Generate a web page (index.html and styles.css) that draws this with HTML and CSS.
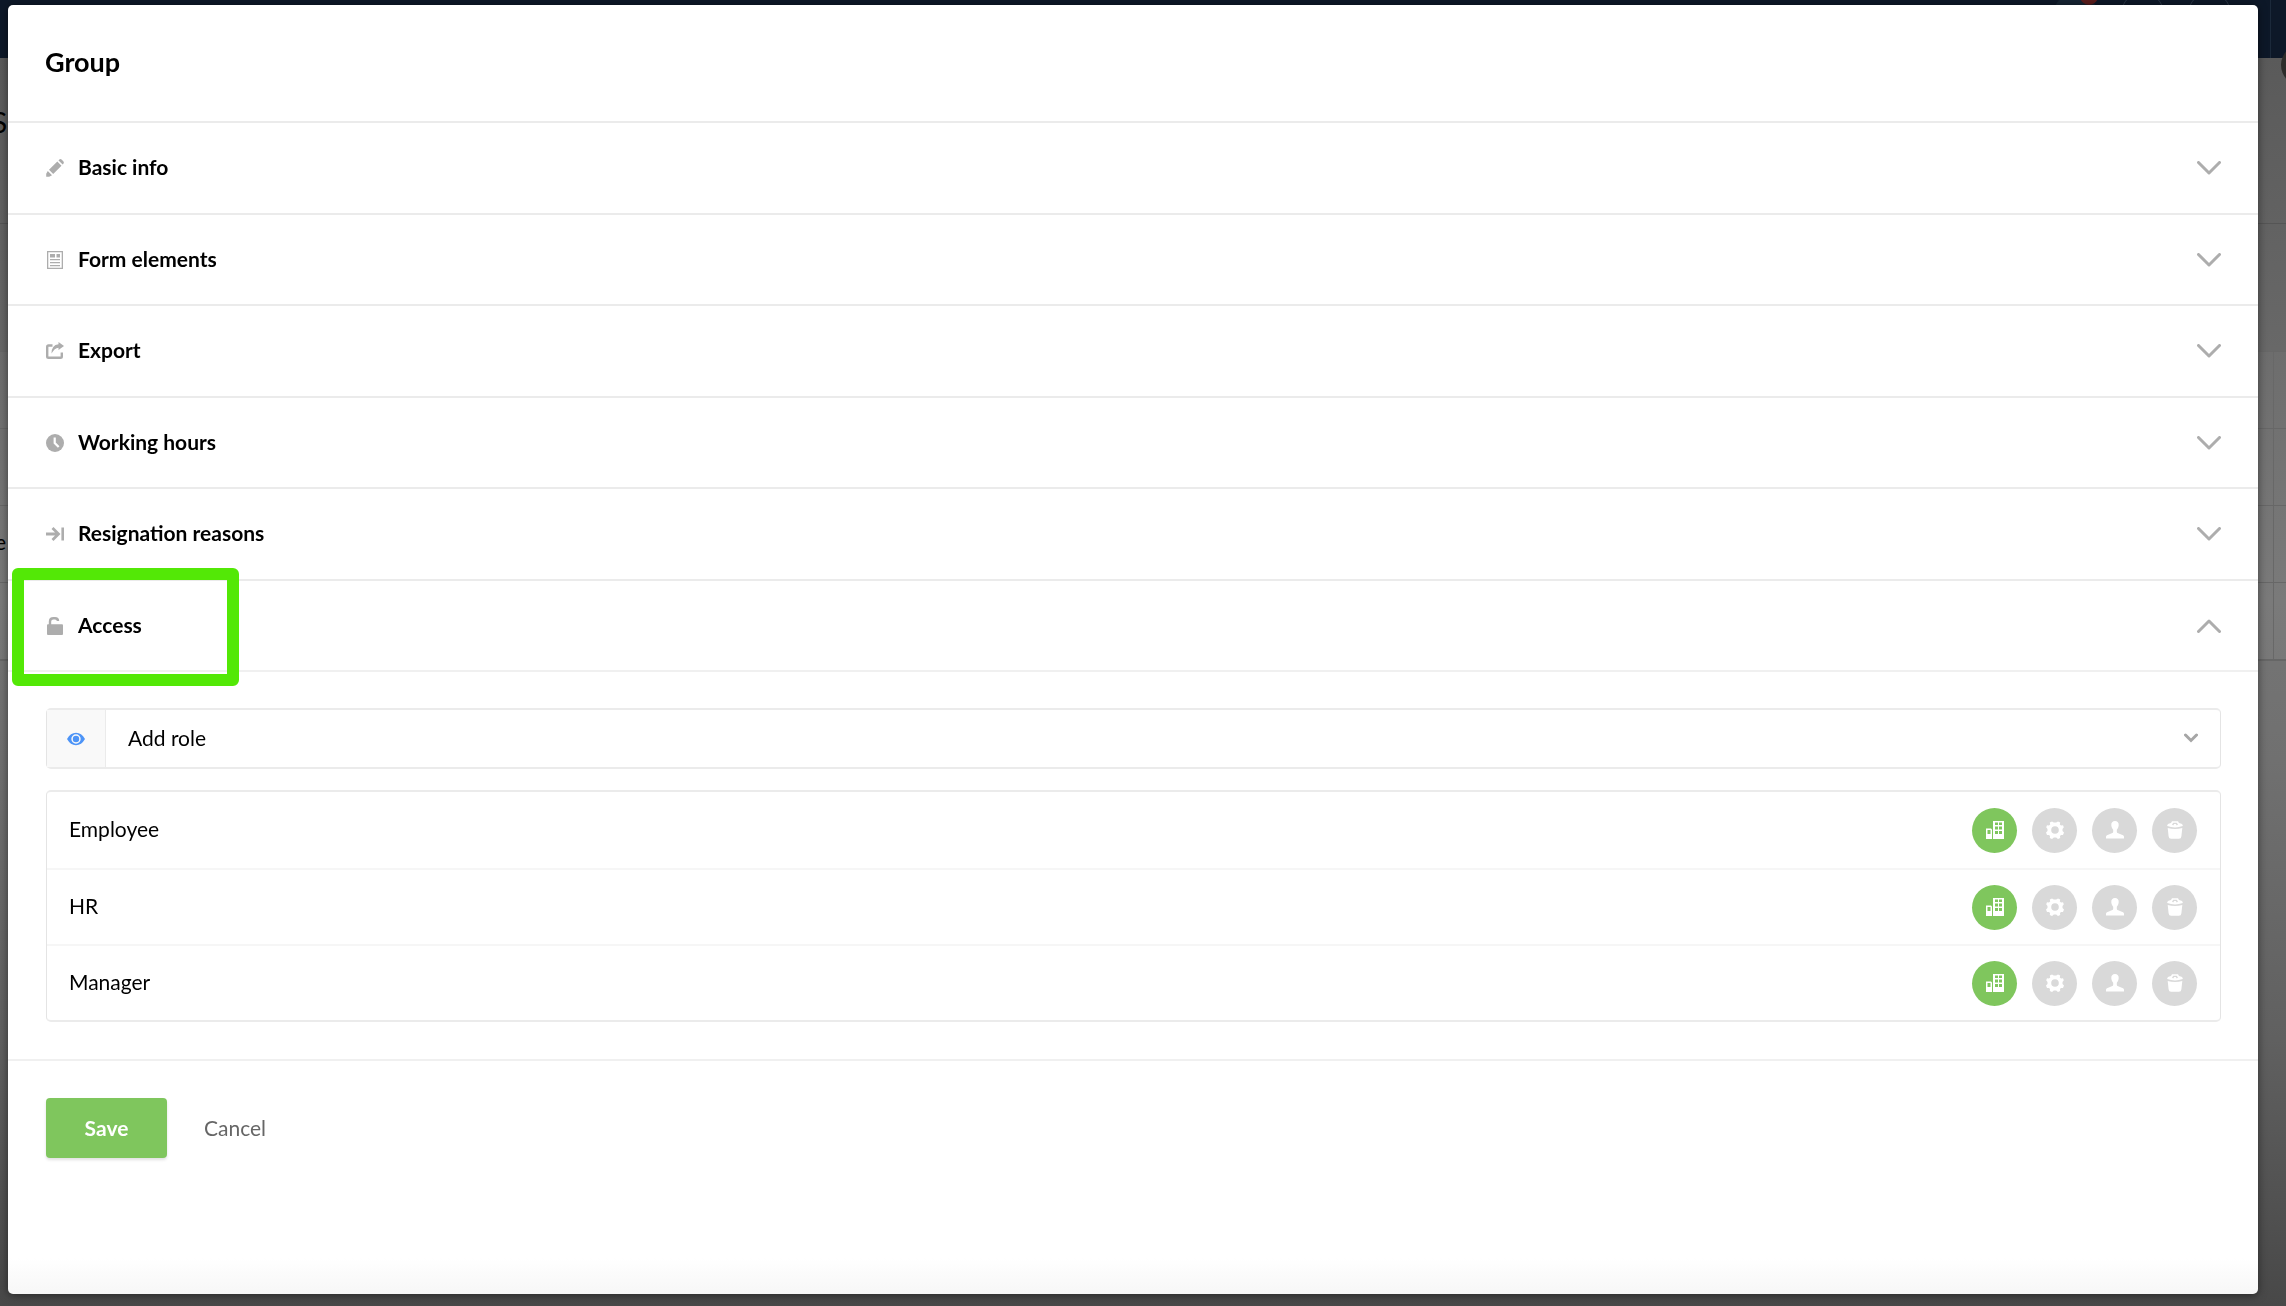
FILE: index.html
```html
<!DOCTYPE html>
<html lang="en">
<head>
    <meta charset="utf-8">
    <title>Group</title>
    <link rel="stylesheet" href="styles.css">
</head>
<body>
    <!-- shared icons -->
    <svg class="sprite" aria-hidden="true">
        <symbol id="chevron" viewBox="0 0 24 14"><path d="M1.5 1.5 12 12 22.5 1.5" fill="none" stroke="currentColor" stroke-width="3" stroke-linecap="round" stroke-linejoin="round"/></symbol>
        <symbol id="building" viewBox="0 0 18 18"><path fill-rule="evenodd" d="M7 0h11v18H7zM9 1.500v2.500h3v-2.500zM13 1.500v2.500h3v-2.500zM9 5.500v3h3v-3zM13 5.500v3h3v-3zM9 10v3h3v-3zM13 10v3h3v-3zM0 7.500h5l1 1V18H0zM1.500 9v4h3V9z"/></symbol>
        <symbol id="gear" viewBox="0 0 18 18"><path fill-rule="evenodd" d="M6 .5 7.800 1.500h2.400L12 .5l2.200 1L13.800 3.500 15 4.500l2-.2L17.800 6.200 16.500 8v2l1.500 1.600-1 2.400-2-.1-1 1 .2 2-2.200 1L10.200 16.500H7.800L6 18l-2.200-1 .2-2-1-1-2 .1L0 11.600 1.500 10V8L.2 6.200 1 4.300l2 .2 1.200-1L3.800 1.500zM9 5.200a3.800 3.800 0 1 0 0 7.600 3.800 3.800 0 0 0 0-7.600z"/></symbol>
        <symbol id="person" viewBox="0 0 18 18"><path d="M9 0c2.400 0 4 1.700 3.700 4.300-.2 1.800-.8 3.300-1.900 4.400v2.100c0 .8.500 1.200 1.400 1.500l4.200 1.700c1 .4 1.600 1 1.600 2V17.500H0V16c0-1 .6-1.600 1.600-2l4.200-1.700c.9-.3 1.400-.7 1.400-1.500V8.700C6.100 7.600 5.500 6.100 5.300 4.300 5 1.700 6.600 0 9 0z"/></symbol>
        <symbol id="bin" viewBox="0 0 18 18"><path fill-rule="evenodd" d="M6 .3h6l1 1.700 2.500.8q1.500 1 1.300 2.300Q9 8 1.200 5.100 1 3.800 2.500 2.800L5 2zM7.300 1.800 6 3.600l1.200.8.900-1.300h1.800l.9 1.300 1.200-.8-1.300-1.800z"/><path d="M1.700 7.100q7.300 1.900 14.600 0l-.9 8.200q-.2 2.500-2.500 2.500H5.100q-2.300 0-2.500-2.500z"/></symbol>
    </svg>

    <!-- page behind the dialog -->
    <div class="page" aria-hidden="true">
        <div class="topbar">
            <span class="bubble filled"><i class="badge"></i></span>
            <span class="bubble"></span>
            <span class="bubble"></span>
            <span class="profile"></span>
        </div>
        <div class="page-head"><span>S</span><i class="avatar"></i></div>
        <div class="page-filter"></div>
        <div class="page-table">
            <div></div>
            <div></div>
            <div>e</div>
            <div></div>
        </div>
    </div>

    <main class="modal" role="dialog" aria-labelledby="title">
        <h1 class="modal-title" id="title">Group</h1>

        <div class="accordion">
            <button class="section" type="button" aria-expanded="false">
                <svg class="icon" viewBox="0 0 18 18"><path d="m11.300 2.500 4.200 4.200-8.300 8.300L3 10.800zM12.500 1.400 13.300.6q1.300-1 2.500.1l1.500 1.500q1.100 1.200.1 2.500l-.7.800zM1.800 12 6 16.200 3.200 17.800H.2V14.800z"/></svg>
                <span>Basic info</span>
                <svg class="chevron"><use href="#chevron"/></svg>
            </button>
            <button class="section" type="button" aria-expanded="false">
                <svg class="icon" viewBox="0 0 18 18"><path fill-rule="evenodd" d="M1 0h16v18H1zM2.300 1.300v15.400h13.400V1.300z"/><path d="M4 3h5v3.500H4zM10.500 3H14v3.500h-3.500zM4 8h10v1.200H4zM4 11h10v1.200H4zM4 14h10v1.200H4z"/></svg>
                <span>Form elements</span>
                <svg class="chevron"><use href="#chevron"/></svg>
            </button>
            <button class="section" type="button" aria-expanded="false">
                <svg class="icon" viewBox="0 0 18 18"><path d="M6.500 3.500H2.500Q1.200 3.500 1.200 5v9.500Q1.200 15.800 2.500 15.800h12q1.300 0 1.300-1.300V10.500" fill="none" stroke="currentColor" stroke-width="2.400"/><path d="M12.500 0 18 4l-5.500 4V5.700Q8.500 6 5.500 11.500 5.500 3 12.500 2.300z"/></svg>
                <span>Export</span>
                <svg class="chevron"><use href="#chevron"/></svg>
            </button>
            <button class="section" type="button" aria-expanded="false">
                <svg class="icon" viewBox="0 0 18 18"><circle cx="9" cy="9" r="9"/><path d="M8.700 3.500V9l4 4" fill="none" stroke="#fff" stroke-width="2.200"/></svg>
                <span>Working hours</span>
                <svg class="chevron"><use href="#chevron"/></svg>
            </button>
            <button class="section" type="button" aria-expanded="false">
                <svg class="icon" viewBox="0 0 18 18"><path d="M0 9h12M6.500 3l6 6-6 6M16.800 2.500v13" fill="none" stroke="currentColor" stroke-width="2.800"/></svg>
                <span>Resignation reasons</span>
                <svg class="chevron"><use href="#chevron"/></svg>
            </button>
            <button class="section open" type="button" aria-expanded="true" aria-controls="access">
                <svg class="icon" viewBox="0 0 18 18"><path d="M1 8.200Q1 7.200 2 7.200H16q1 0 1 1V17q0 1-1 1H2q-1 0-1-1z"/><path d="M4 8V4.500Q4 1.300 7.500 1.300h1.500q3 0 3 2.800" fill="none" stroke="currentColor" stroke-width="2.400"/></svg>
                <span>Access</span>
                <svg class="chevron"><use href="#chevron"/></svg>
            </button>
        </div>

        <div class="panel" id="access">
            <div class="role-select">
                <label for="role" aria-label="Role">
                    <svg class="icon" viewBox="0 0 18 18"><path fill-rule="evenodd" d="M0 9Q3.500 2.800 9 2.800T18 9q-3.500 6.200-9 6.200T0 9zM9 4.300a4.700 4.700 0 1 0 0 9.400 4.700 4.700 0 0 0 0-9.400z"/><circle cx="9" cy="9" r="3.200"/></svg>
                </label>
                <select id="role"><option>Add role</option></select>
                <svg class="arrow" viewBox="0 0 14 10"><path d="m1.500 2 5.500 5.500L12.500 2" fill="none" stroke="currentColor" stroke-width="3" stroke-linecap="round"/></svg>
            </div>

            <ul class="roles">
                <li>
                    <span>Employee</span>
                    <button class="round active" type="button" aria-label="Company"><svg class="icon"><use href="#building"/></svg></button>
                    <button class="round" type="button" aria-label="Settings"><svg class="icon"><use href="#gear"/></svg></button>
                    <button class="round" type="button" aria-label="Person"><svg class="icon"><use href="#person"/></svg></button>
                    <button class="round" type="button" aria-label="Delete"><svg class="icon"><use href="#bin"/></svg></button>
                </li>
                <li>
                    <span>HR</span>
                    <button class="round active" type="button" aria-label="Company"><svg class="icon"><use href="#building"/></svg></button>
                    <button class="round" type="button" aria-label="Settings"><svg class="icon"><use href="#gear"/></svg></button>
                    <button class="round" type="button" aria-label="Person"><svg class="icon"><use href="#person"/></svg></button>
                    <button class="round" type="button" aria-label="Delete"><svg class="icon"><use href="#bin"/></svg></button>
                </li>
                <li>
                    <span>Manager</span>
                    <button class="round active" type="button" aria-label="Company"><svg class="icon"><use href="#building"/></svg></button>
                    <button class="round" type="button" aria-label="Settings"><svg class="icon"><use href="#gear"/></svg></button>
                    <button class="round" type="button" aria-label="Person"><svg class="icon"><use href="#person"/></svg></button>
                    <button class="round" type="button" aria-label="Delete"><svg class="icon"><use href="#bin"/></svg></button>
                </li>
            </ul>
        </div>

        <div class="actions">
            <button class="save" type="submit">Save</button>
            <button class="cancel" type="button">Cancel</button>
        </div>
    </main>
</body>
</html>
```
FILE: styles.css
```css
*,
*::after {
    box-sizing: border-box;
}

body {
    margin: 0;
    min-height: 100vh;
    padding: 5px 28px 12px 8px;
    display: flex;
    font-family: Lato, "Liberation Sans", sans-serif;
    font-size: 21px;
    line-height: 24px;
    color: #000;
    background: #5c5c5c;
}

button,
select {
    font: inherit;
    color: inherit;
    border: 0;
    background: none;
    padding: 0;
}

.sprite {
    position: absolute;
    width: 0;
    height: 0;
}

.icon {
    width: 18px;
    height: 18px;
    fill: currentColor;
    flex: none;
}

/* Dimmed page behind the dialog */
.page {
    position: fixed;
    inset: 0;
    overflow: hidden;
    background: linear-gradient(#5a5a5a 58px, #686868 350px, #757575 600px, #707070 760px, #606060 1040px, #484848);
}

.topbar {
    height: 58px;
    display: flex;
    justify-content: flex-end;
    gap: 24px;
    background: #0d1828;
}

.bubble {
    position: relative;
    width: 43px;
    height: 43px;
    margin-top: -8px;
    border: 1px solid #2b3747;
    border-radius: 50%;
}

.bubble.filled {
    background: #162433;
    border-color: #162433;
}

.badge {
    position: absolute;
    right: -2px;
    top: -6px;
    width: 18px;
    height: 18px;
    border-radius: 50%;
    background: #5a1d1d;
}

.profile {
    width: 16px;
    border-left: 1px solid #1b293a;
    margin-left: 15px;
}

.page-head {
    position: relative;
    height: 166px;
    padding-top: 48px;
    font-size: 28px;
    line-height: 32px;
    border-bottom: 1px solid #555;
}

.page-head span {
    margin-left: -8px;
}

.avatar {
    position: absolute;
    right: -37px;
    top: -14px;
    width: 42px;
    height: 42px;
    border-radius: 50%;
    background: #2d2c2a;
}

.page-filter {
    height: 127px;
}

.page-table {
    border-bottom: 2px solid #666;
    background: linear-gradient(to left, transparent 12px, #686868 12px, #686868 13px, transparent 13px), rgba(255, 255, 255, 0.04);
}

.page-table div {
    height: 77px;
    padding-top: 24px;
    border-top: 1px solid #676767;
    text-indent: -5px;
}

/* Dialog */
.modal {
    position: relative;
    flex: 1;
    border-radius: 5px;
    background: linear-gradient(to top, #f7f7f7, #fff 36px);
    box-shadow: 0 1px 8px rgba(0, 0, 0, 0.5);
}

.modal-title {
    margin: 0;
    padding: 41px 37px 43px;
    font-size: 27px;
    line-height: 32px;
    font-weight: 700;
}

.section {
    position: relative;
    display: flex;
    align-items: center;
    gap: 14px;
    width: 100%;
    height: 92px;
    padding: 0 37px 0 38px;
    border-top: 2px solid #ebebeb;
    font-weight: 700;
    text-align: left;
}

.section:nth-child(even) {
    height: 91px;
}

.section span {
    padding-bottom: 2px;
}

.section .icon {
    color: #adadad;
}

.chevron {
    width: 24px;
    height: 14px;
    margin-left: auto;
    color: #adadad;
}

.open .chevron {
    transform: rotate(180deg);
}

/* Green marker round the open section */
.open::after {
    content: "";
    position: absolute;
    left: 4px;
    top: -13px;
    width: 227px;
    height: 118px;
    border: 12px solid #53e806;
    border-radius: 6px;
}

.panel {
    padding: 36px 37px 37px 38px;
    border-top: 2px solid #f0f0f0;
}

.role-select {
    position: relative;
    display: flex;
    height: 61px;
    border: 1px solid #e4e4e4;
    border-width: 2px 1px;
    border-color: #ebebeb #e4e4e4;
    border-radius: 5px;
}

.role-select label {
    display: flex;
    align-items: center;
    justify-content: center;
    width: 59px;
    border-right: 1px solid #ebebeb;
    background: #f9f9f9;
    color: #4d94f7;
}

.role-select select {
    flex: 1;
    padding: 0 0 2px 22px;
    appearance: none;
}

.arrow {
    position: absolute;
    right: 22px;
    top: 23px;
    width: 14px;
    height: 10px;
    color: #a6a6a6;
    pointer-events: none;
}

.roles {
    margin: 21px 0 0;
    padding: 0;
    list-style: none;
    border: 1px solid #e4e4e4;
    border-width: 2px 1px;
    border-color: #ebebeb #e4e4e4;
    border-radius: 5px;
}

.roles li {
    display: flex;
    align-items: center;
    gap: 15px;
    height: 76px;
    padding: 0 23px 0 22px;
}

.roles li + li {
    border-top: 2px solid #f6f6f6;
}

.roles span {
    flex: 1;
    padding-bottom: 2px;
}

.round {
    display: flex;
    align-items: center;
    justify-content: center;
    width: 45px;
    height: 45px;
    border-radius: 50%;
    background: #d9d9d9;
    color: #fff;
}

.round.active {
    background: #7fc65d;
}

.actions {
    display: flex;
    gap: 37px;
    padding: 37px 38px;
    border-top: 2px solid #f0f0f0;
}

.save {
    width: 121px;
    height: 60px;
    border-radius: 4px;
    background: #7fc65d;
    box-shadow: 0 2px 3px rgba(0, 0, 0, 0.12);
    color: #fff;
    font-weight: 700;
}

.cancel {
    color: #666;
}
```
